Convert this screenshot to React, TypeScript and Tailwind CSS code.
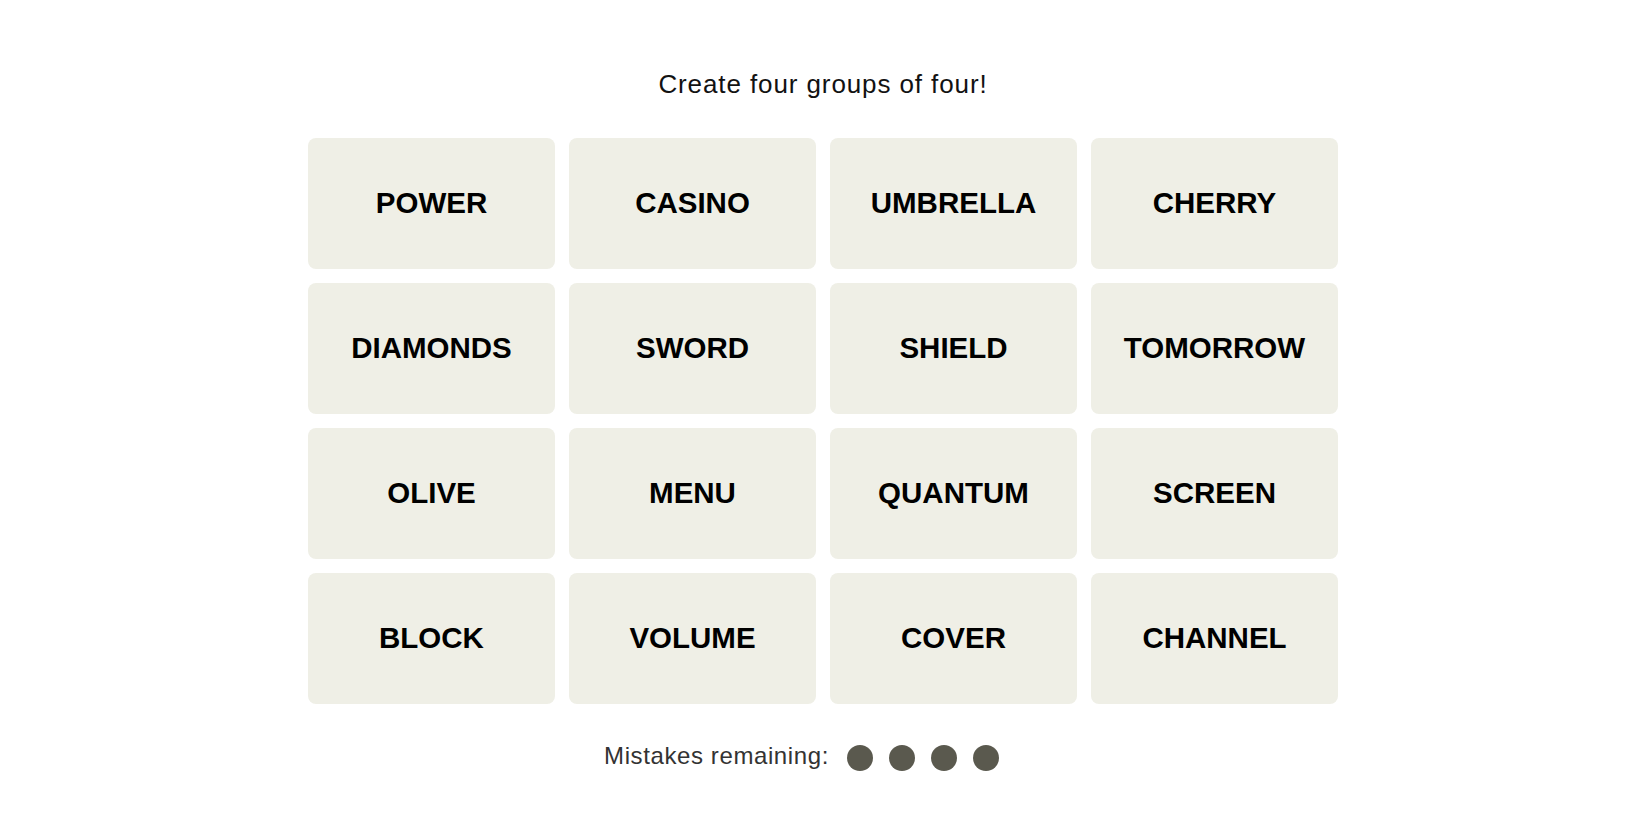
import React from "react";

const words = [
  "POWER", "CASINO", "UMBRELLA", "CHERRY",
  "DIAMONDS", "SWORD", "SHIELD", "TOMORROW",
  "OLIVE", "MENU", "QUANTUM", "SCREEN",
  "BLOCK", "VOLUME", "COVER", "CHANNEL",
];

export default function App() {
  return (
    <div
      className="w-full min-h-[825px] bg-white flex flex-col items-center"
      style={{ fontFamily: '"Liberation Sans", Arial, sans-serif' }}
    >
      <div className="pt-[68px] pr-[4px] flex justify-center w-full">
        <p className="text-[26px] leading-[32px] tracking-[0.9px] text-[#121212]">
          Create four groups of four!
        </p>
      </div>
      <div className="mt-[38px] pr-[4px] flex justify-center w-full">
        <div className="grid grid-cols-[repeat(4,247px)] auto-rows-[131px] gap-x-[14px] gap-y-[14px]">
          {words.map((w) => (
            <div
              key={w}
              className="bg-[#efefe6] rounded-[8px] flex items-center justify-center text-[29.5px] font-bold text-black uppercase"
            >
              {w}
            </div>
          ))}
        </div>
      </div>
      <div className="mt-[37px] pr-[47px] flex justify-center w-full">
        <div className="flex items-center h-[30px]">
          <span className="text-[24px] leading-[30px] tracking-[0.6px] text-[#333333]">Mistakes remaining:</span>
          <div className="ml-[18px] mt-[4px] flex gap-[16px]">
            <span className="block w-[26px] h-[26px] rounded-full bg-[#5a594e]" />
            <span className="block w-[26px] h-[26px] rounded-full bg-[#5a594e]" />
            <span className="block w-[26px] h-[26px] rounded-full bg-[#5a594e]" />
            <span className="block w-[26px] h-[26px] rounded-full bg-[#5a594e]" />
          </div>
        </div>
      </div>
    </div>
  );
}
